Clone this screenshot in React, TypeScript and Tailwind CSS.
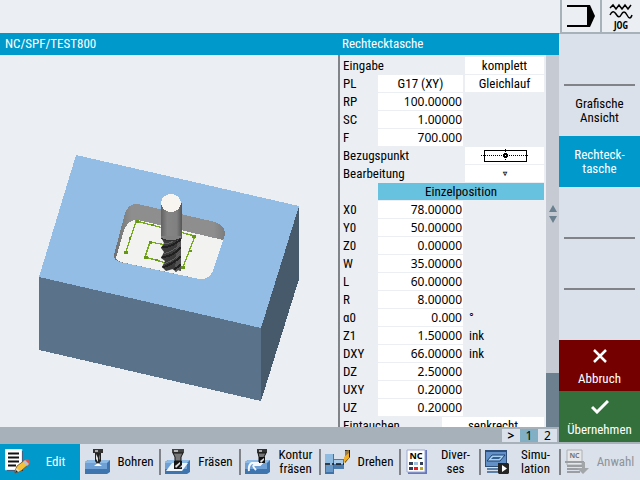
import React from "react";

type SoftKey = { lines: string[]; icon?: React.ReactNode; disabled?: boolean; active?: boolean };
type Param = { id: string; value: string; unit?: string };

const feedParams: Param[] = [
  { id: "RP", value: "100.00000" },
  { id: "SC", value: "1.00000" },
  { id: "F", value: "700.000" },
];

const pocketParams: Param[] = [
  { id: "X0", value: "78.00000" },
  { id: "Y0", value: "50.00000" },
  { id: "Z0", value: "0.00000" },
  { id: "W", value: "35.00000" },
  { id: "L", value: "60.00000" },
  { id: "R", value: "8.00000" },
  { id: "α0", value: "0.000", unit: "°" },
  { id: "Z1", value: "1.50000", unit: "ink" },
  { id: "DXY", value: "66.00000", unit: "ink" },
  { id: "DZ", value: "2.50000" },
  { id: "UXY", value: "0.20000" },
  { id: "UZ", value: "0.20000" },
];

function Choice({ id, value, className, label }: { id: string; value: string; className: string; label?: string }) {
  return (
    <select
      id={id}
      aria-label={label}
      defaultValue={value}
      className={`h-[17px] appearance-none text-center [text-align-last:center] outline-none ${className}`}
    >
      <option>{value}</option>
    </select>
  );
}

function ParamRow({ param }: { param: Param }) {
  return (
    <div className="flex h-[17px] items-center">
      <label htmlFor={param.id} className="w-[35px]">{param.id}</label>
      <input
        id={param.id}
        defaultValue={param.value}
        className="h-[17px] w-[85px] bg-white pr-px text-right font-['Noto_Sans',sans-serif] text-[12px] outline-none"
      />
      {param.unit && <span className="ml-[6px]">{param.unit}</span>}
    </div>
  );
}

function Workpiece() {
  return (
    <svg viewBox="0 55 338 372" className="h-full w-full" shapeRendering="crispEdges" role="img" aria-label="Rechtecktasche 3D">
      <defs>
        <linearGradient id="shaft" x1="0" x2="1" y1="0" y2="0">
          <stop offset="0" stopColor="#626262" />
          <stop offset=".3" stopColor="#858585" />
          <stop offset=".75" stopColor="#808080" />
          <stop offset="1" stopColor="#555" />
        </linearGradient>
        <linearGradient id="wall" x1="0" x2="1" y1="0" y2="0">
          <stop offset="0" stopColor="#6f6f6f" />
          <stop offset=".16" stopColor="#8e8e8e" />
          <stop offset=".9" stopColor="#8e8e8e" />
          <stop offset="1" stopColor="#7c7c7c" />
        </linearGradient>
        <clipPath id="cutter"><path d="M161 237L181 239V271L178 270L176 272L173 269L166 271L162 267L165 261L161 258L164 252L161 248L164 243Z" /></clipPath>
      </defs>
      <path d="M76 155L299 206L261 328L39 277Z" fill="#93bde4" />
      <path d="M39 277L261 328V401L39 350Z" fill="#5b728b" />
      <path d="M299 206V279L261 401V328Z" fill="#475a6c" />
      <path d="M114 255L125 213Q129 203 138 204L215 222Q225 225 225 234L223 241L213 271Q209 280 199 279L120 262Q113 260 114 255Z" fill="url(#wall)" />
      <path d="M116 258L124 230Q129 219 138 220L223 240L213 271Q209 280 199 279L121 262Q117 261 116 258Z" fill="#f2f2f1" />
      <g fill="none" stroke="#79aa20" strokeWidth="1.3">
        <path d="M126 252L136 221L195 236L183 267H177" />
        <path d="M166 245L150 242L145 257L166 263" />
      </g>
      <g fill="#669516">
        <path d="M124 251h4v3h-4zM136 220h3v3h-3zM192 235h4v3h-4zM181 266h4v3h-4zM149 241h3v3h-3zM144 256h4v3h-4zM129 237h2v3h-2zM151 224h3v2h-3zM189 250h3v2h-3zM155 259h3v2h-3z" />
      </g>
      <path d="M161 203H182V239Q171 244 161 239Z" fill="url(#shaft)" />
      <ellipse cx="171" cy="203" rx="10" ry="9" fill="#f8f5f1" />
      <g clipPath="url(#cutter)">
        <path d="M160 234H182V273H160Z" fill="#3b3b3b" />
        <path d="M177 238H182V273H175Z" fill="#535353" />
        <g fill="none" strokeWidth="2">
          <path d="M161 247Q172 248 181 239M161 257Q173 257 181 247M161 268Q174 264 181 256M168 272Q177 269 181 264" stroke="#1f1f1f" />
          <path d="M161 244Q170 245 177 238M161 254Q172 253 180 244M162 264Q173 262 180 253" stroke="#606060" strokeWidth="1" />
        </g>
      </g>
      <path d="M161 236H181V238Q171 244 161 238Z" fill="#808080" />
      <path d="M161 238Q171 244 181 238" stroke="#303030" fill="none" />
    </svg>
  );
}

function Block() {
  return (
    <>
      <path d="M0 13L3 11H25V23L22 25H0Z" fill="#3f75ae" />
      <path d="M0 13L3 11H25L22 14H0Z" fill="#8dbbe6" />
      <path d="M0 14H22V20H0Z" fill="#6e9fd5" />
    </>
  );
}

function Icon({ children }: { children: React.ReactNode }) {
  return <svg viewBox="0 0 26 26" className="h-[26px] w-[26px] shrink-0" aria-hidden="true">{children}</svg>;
}

const editIcon = (
  <Icon>
    <path d="M2 2H18V22H2Z" fill="#17365c" />
    <path d="M0 0H17V21H0Z" fill="#fff" stroke="#b9c6d5" strokeWidth=".6" />
    <path d="M3 4.500H14M3 8.500H14M3 12.500H14M3 16.500H11" stroke="#111" strokeWidth="1.800" />
    <path d="M10 22L12 17L20 11L24 15L16 22L10 24Z" fill="#f4c33b" stroke="#754d1c" strokeWidth=".8" />
    <path d="M19 12L21 10Q25 10 25 14L23 16Z" fill="#d45b4b" />
    <path d="M18 13L20 11L24 15L22 17Z" fill="#b8c3ce" />
    <path d="M10 24L11.500 19L15 22Z" fill="#e9dcc0" />
    <path d="M10 24L11 21L13 23Z" fill="#222" />
  </Icon>
);

const drillIcon = (
  <Icon>
    <Block />
    <path d="M8 0H18V4H8Z" fill="#333" /><path d="M10 1H13V3H10Z" fill="#aaa" />
    <path d="M10 4H16V12L13 16L10 12Z" fill="#222" />
    <path d="M11 5L13 9V13L11 10Z" fill="#e0e0e0" /><path d="M14 5L15 8V11L14 10Z" fill="#777" />
    <path d="M9 17L13 14L17 17Z" fill="#fff" />
  </Icon>
);

const millIcon = (
  <Icon>
    <Block />
    <path d="M1 22L7 14H23L17 22Z" fill="#edf5fd" />
    <path d="M7 0H19V4H7Z" fill="#444" /><path d="M9 1H13V3H9Z" fill="#b5b5b5" />
    <path d="M8 4H18L16 8V12H10V8Z" fill="#777" stroke="#111" />
    <path d="M9 12H17V20H9Z" fill="#151515" />
    <path d="M10 17L15 13V15L11 19ZM14 19L17 16V18Z" fill="#ddd" />
  </Icon>
);

const contourIcon = (
  <Icon>
    <Block />
    <path d="M4 22Q3 16 7 14H17L15 16H9Q7 17 11 21" fill="none" stroke="#f4f8fc" strokeWidth="2" />
    <path d="M12 0H22V4H12Z" fill="#333" /><path d="M14 1H17V3H14Z" fill="#aaa" />
    <path d="M13 4H21L19 8V13H14V8Z" fill="#777" stroke="#111" />
    <path d="M14 8H20V14H14Z" fill="#111" /><path d="M15 12L19 9V11L16 14Z" fill="#ddd" />
  </Icon>
);

const turnIcon = (
  <Icon>
    <path d="M0 5H9V25H0Z" fill="#3d73a8" /><path d="M0 5H8V16H0Z" fill="#91bce2" /><path d="M1 16H8V23H1Z" fill="#6798c8" />
    <path d="M9 10H19V20H9Z" fill="#4b7cad" /><path d="M9 11H18V15H9Z" fill="#a8cbe9" />
    <path d="M0 15H19" stroke="#111" strokeWidth="1.500" strokeDasharray="5 2 2 2" />
    <path d="M20 1H25V8L20 14Z" fill="#161616" /><path d="M20 2L24 1V5L20 10Z" fill="#9b7c40" /><path d="M19 8L24 4V9L19 14Z" fill="#f2af23" />
  </Icon>
);

const miscIcon = (
  <Icon>
    <path d="M3 1H22V25H3Z" fill="#6678bd" /><path d="M2 1H20V23H2Z" fill="#fff" stroke="#9ea8d2" />
    <text x="11" y="10" textAnchor="middle" fontFamily="Noto Sans" fontWeight="700" fontSize="9">NC</text>
    <g fill="#333f58"><path d="M4 13h4v3H4zM15 13h3v3h-3zM4 18h4v3H4z" /></g>
    <path d="M9 13h4v3H9z" fill="#9fc1dd" /><path d="M9 18h4v3H9z" fill="#ef171c" /><path d="M15 18h3v3h-3z" fill="#bba529" />
  </Icon>
);

const simulationIcon = (
  <Icon>
    <path d="M0 1H22V18H0Z" fill="#2c4e79" /><path d="M1 3H21V17H1Z" fill="#6391c7" />
    <path d="M2 12L7 6H20L15 12Z" fill="#a9d2f3" stroke="#1d4170" /><path d="M6 10L8 8H16L14 10Z" fill="#315f94" />
    <path d="M2 20H14M2 23H14" stroke="#315f94" strokeWidth="1.500" />
    <path d="M13 14H23L24 15V24L23 25H14L13 24Z" fill="#252525" /><path d="M17 16L22 19.500L17 23Z" fill="#fff" />
  </Icon>
);

const selectIcon = (
  <Icon>
    <path d="M2 1H17V16H2Z" fill="#e5e7e9" stroke="#adb0b3" />
    <text x="9.500" y="9" textAnchor="middle" fontFamily="Noto Sans" fontWeight="700" fontSize="7" fill="#777">NC</text>
    <path d="M0 13H19M2 17H17M2 20H17M2 23H15" stroke="#9b9ea2" strokeWidth="2" />
    <path d="M17 13H20V19H24L18 25L12 19H17Z" fill="#a3a6a9" />
  </Icon>
);

const bottomKeys: SoftKey[] = [
  { lines: ["Edit"], icon: editIcon, active: true },
  { lines: ["Bohren"], icon: drillIcon },
  { lines: ["Fräsen"], icon: millIcon },
  { lines: ["Kontur", "fräsen"], icon: contourIcon },
  { lines: ["Drehen"], icon: turnIcon },
  { lines: ["Diver-", "ses"], icon: miscIcon },
  { lines: ["Simu-", "lation"], icon: simulationIcon },
  { lines: ["Anwahl"], icon: selectIcon, disabled: true },
];

function Rule() {
  return <span className="absolute inset-x-[5px] -bottom-px h-[2px] bg-[#808488]" />;
}

function SideKeys() {
  return (
    <aside className="grid w-[81px] shrink-0 grid-rows-8 border-t border-[#a7b1b9] bg-[#dae1ea] text-center leading-[14px]">
      <button aria-label="Taste 1" className="relative"><Rule /></button>
      <button>Grafische<br />Ansicht</button>
      <button className="bg-[#0099cc] text-white">Rechteck-<br />tasche</button>
      <button aria-label="Taste 4" className="relative"><Rule /></button>
      <button aria-label="Taste 5" className="relative"><Rule /></button>
      <button aria-label="Taste 6" />
      <button className="flex flex-col items-center justify-end gap-[9px] bg-[#750000] pb-[5px] text-white">
        <svg viewBox="0 0 14 14" className="h-[14px] w-[14px]" aria-hidden="true"><path d="M1 1L13 13M13 1L1 13" stroke="#fff" strokeWidth="2.500" /></svg>
        Abbruch
      </button>
      <button className="flex flex-col items-center justify-end gap-[9px] bg-[#34703c] pb-[5px] text-white">
        <svg viewBox="0 0 18 14" className="h-[14px] w-[18px]" aria-hidden="true"><path d="M1 7L6 12L17 1" fill="none" stroke="#fff" strokeWidth="3" /></svg>
        Übernehmen
      </button>
    </aside>
  );
}

function PocketForm() {
  return (
    <form className="flex w-[221px] shrink-0 overflow-hidden border-l-2 border-[#808488]">
      <div className="flex min-w-0 flex-1 flex-col gap-px py-[2px] pr-[2px] pl-[3px] leading-[17px] *:shrink-0">
        <div className="flex items-center justify-between">
          <label htmlFor="eingabe">Eingabe</label>
          <Choice id="eingabe" value="komplett" className="w-[79px] bg-white" />
        </div>
        <div className="flex items-center">
          <label htmlFor="pl" className="w-[35px]">PL</label>
          <Choice id="pl" value="G17 (XY)" className="mr-[2px] w-[85px] bg-white" />
          <Choice id="lauf" label="Fräsrichtung" value="Gleichlauf" className="w-[79px] bg-white" />
        </div>
        {feedParams.map((p) => <ParamRow key={p.id} param={p} />)}
        <div className="flex h-[17px] items-center justify-between">
          <label htmlFor="bezug">Bezugspunkt</label>
          <button id="bezug" type="button" aria-label="Bezugspunkt Mitte" className="flex h-[17px] w-[79px] items-center justify-center bg-white">
            <svg viewBox="0 0 48 13" className="h-[13px] w-[48px]" shapeRendering="crispEdges" aria-hidden="true">
              <path d="M3 1H45V12H3Z" fill="none" stroke="#000" strokeWidth="1" transform="translate(.5 .5)" />
              <path d="M0 6.500H48M24.500 0V13" stroke="#000" strokeDasharray="1 1" />
              <circle cx="24.500" cy="6.500" r="2.500" fill="#000" />
              <path d="M24 6h1v1h-1z" fill="#fff" />
            </svg>
          </button>
        </div>
        <div className="flex items-center justify-between">
          <label htmlFor="bearbeitung">Bearbeitung</label>
          <Choice id="bearbeitung" value="▿" className="w-[79px] bg-white text-[8px] font-bold" />
        </div>
        <Choice id="position" label="Position" value="Einzelposition" className="ml-[35px] w-[166px] bg-[#67c2e0]" />
        {pocketParams.map((p) => <ParamRow key={p.id} param={p} />)}
        <div className="flex items-center justify-between">
          <label htmlFor="eintauchen">Eintauchen</label>
          <Choice id="eintauchen" value="senkrecht" className="w-[102px] bg-white" />
        </div>
      </div>
      <div className="flex w-[13px] shrink-0 flex-col bg-[#c5cad3]">
        <div className="flex flex-1 items-center justify-center">
          <svg viewBox="0 0 8 18" className="h-[18px] w-2" aria-hidden="true"><path d="M4 0L8 7H0ZM0 11H8L4 18Z" fill="#6c8190" /></svg>
        </div>
        <div className="h-[54px] bg-[#6c8090]" />
      </div>
    </form>
  );
}

export default function App() {
  return (
    <div className="flex h-screen flex-col overflow-hidden bg-[#ebeff4] font-['Roboto_Condensed','Open_Sans_Condensed_Light','Lato',sans-serif] text-[13px] text-black">
      <header className="flex h-[33px] shrink-0 justify-end">
        <div className="flex w-[80px] border-b border-l-2 border-[#a7b1b9]">
          <div className="flex flex-1 items-center justify-center border-r-2 border-[#a7b1b9]">
            <svg viewBox="0 0 28 22" className="h-[22px] w-[28px]" aria-hidden="true">
              <path d="M0 1H20M0 21H20" stroke="#000" strokeWidth="2" />
              <path d="M20 0H23L28 11L23 22H20Z" fill="#000" />
            </svg>
          </div>
          <div className="flex flex-1 flex-col items-center justify-end font-['Open_Sans_Condensed',sans-serif] text-[10px] leading-[13px] font-bold text-black">
            <svg viewBox="0 0 24 16" className="h-4 w-6" fill="none" stroke="#000" strokeWidth="1.500" aria-hidden="true">
              <path d="M1 5L4 2L7 6L10 2L13 6L16 2L19 6L22 2" />
              <path d="M1 12Q4 6 7 11T12 12Q15 6 18 12T23 12" />
            </svg>
            JOG
          </div>
        </div>
      </header>
      <div className="flex min-h-0 flex-1">
        <div className="flex min-w-0 flex-1 flex-col">
          <div className="flex h-[22px] shrink-0 items-center bg-[#0099cc] text-white">
            <h1 className="flex-1 pl-[5px]">NC/SPF/TEST800</h1>
            <h2 className="w-[217px]">Rechtecktasche</h2>
          </div>
          <main className="flex min-h-0 flex-1">
            <div className="min-w-0 flex-1"><Workpiece /></div>
            <PocketForm />
          </main>
          <nav className="flex h-[15px] shrink-0 items-start justify-end bg-[#a6b1ba] pt-[2px] pr-[2px] text-center font-['Noto_Sans',sans-serif] text-[12px] leading-[13px]">
            <button className="w-[18px] bg-[#dae1ea] font-bold">&gt;</button>
            <button className="w-[18px] bg-[#82afc3]">1</button>
            <button className="w-[19px] bg-[#dae1ea]">2</button>
          </nav>
        </div>
        <SideKeys />
      </div>
      <div className="h-[2px] shrink-0 bg-[#a6b1ba]" />
      <footer className="flex h-[36px] shrink-0 bg-[#dae1ea] leading-[14px]">
        {bottomKeys.map((key, i) => (
          <button
            key={key.lines[0]}
            disabled={key.disabled}
            className={`relative flex flex-1 items-center pl-[5px] ${key.active ? "bg-[#0099cc] text-white" : key.disabled ? "text-[#8d949b]" : ""}`}
          >
            {i > 1 && <span className="absolute top-[5px] -left-px h-[26px] w-[2px] bg-[#808488]" />}
            {key.icon}
            <span className="flex-1 text-center">
              {key.lines.map((line) => <span key={line} className="block">{line}</span>)}
            </span>
          </button>
        ))}
      </footer>
    </div>
  );
}
